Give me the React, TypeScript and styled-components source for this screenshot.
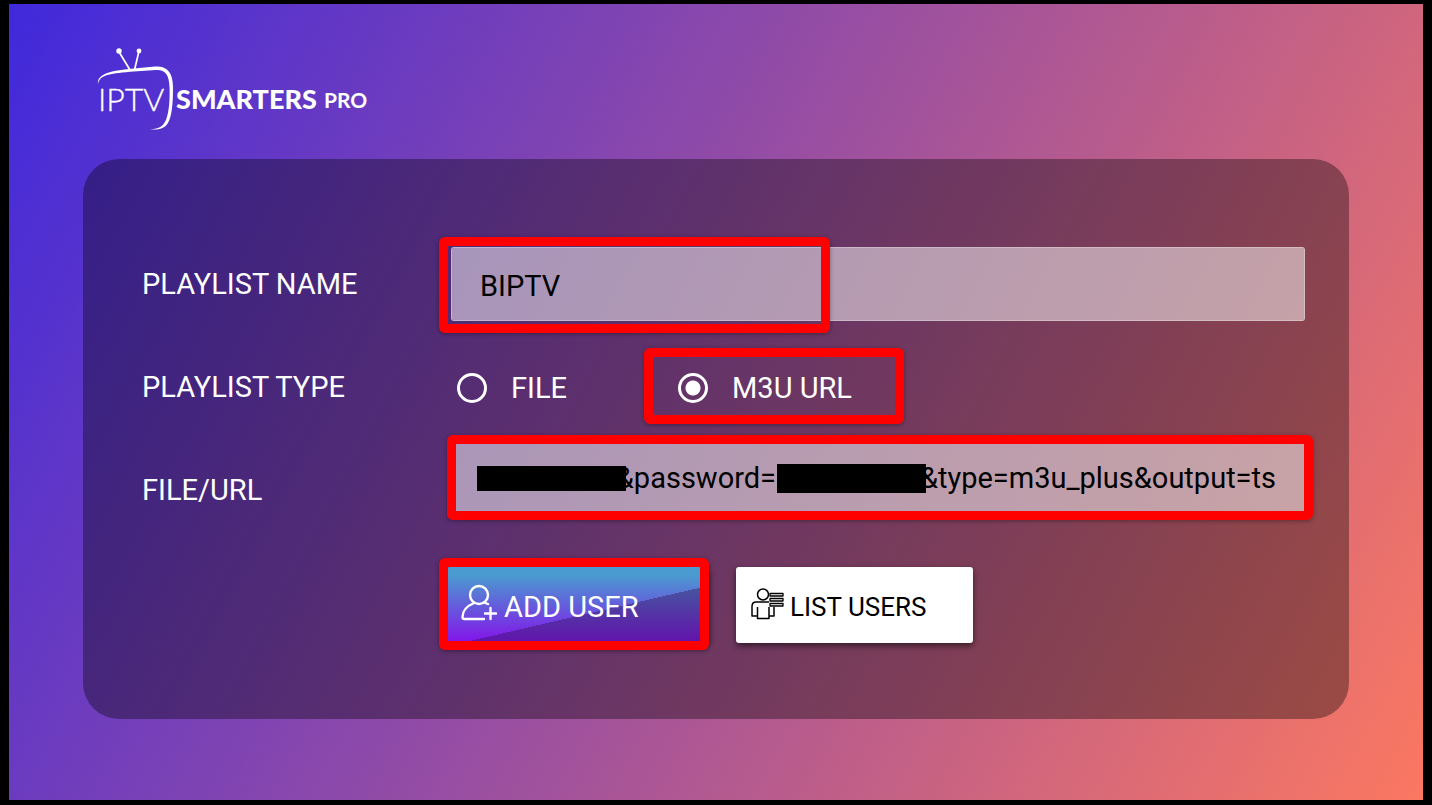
import React, { useState } from "react";
import styled, { createGlobalStyle } from "styled-components";

const GlobalStyle = createGlobalStyle`
  *, *::before, *::after { box-sizing: border-box; }
  html, body, #root { height: 100%; }
  body {
    margin: 0;
    background: #000;
    font-family: Roboto, "Liberation Sans", sans-serif;
    font-size: 29px;
    line-height: 36px;
  }
`;

const Screen = styled.main`
  display: flex;
  flex-direction: column;
  min-height: 100vh;
  padding: 40px 74px 81px;
  border: solid #000;
  border-width: 4px 9px 5px;
  background: linear-gradient(118deg, #4029dc 0%, #fb7861 100%) padding-box;
`;

const Header = styled.header`
  height: 115px;
  padding-left: 12px;
`;

const Logo = styled.svg`
  display: block;
  width: 280px;
  height: 90px;
  fill: #fff;
  font-family: Lato, sans-serif;
`;

const Card = styled.form`
  display: flex;
  flex: 1;
  flex-direction: column;
  padding: 88px 44px 76px 59px;
  border-radius: 36px;
  background: rgba(0, 0, 0, 0.35);
  color: #fff;
`;

const Row = styled.div<{ $height: number; $gap: number }>`
  display: grid;
  grid-template-columns: 309px minmax(0, 1fr);
  align-items: center;
  height: ${(p) => p.$height}px;
  margin-bottom: ${(p) => p.$gap}px;
`;

const Field = styled.div`
  position: relative;
  align-self: start;
  height: 74px;
`;

const TextInput = styled.input<{ $align?: string; $padding: string }>`
  display: block;
  width: 100%;
  height: 100%;
  padding: ${(p) => p.$padding};
  border: 1px solid rgba(255, 255, 255, 0.65);
  border-radius: 3px;
  background: rgba(255, 255, 255, 0.5) padding-box;
  color: #000;
  font: inherit;
  outline: none;
  text-align: ${(p) => p.$align ?? "left"};
`;

const Highlight = styled.span<{ $inset: string; $width?: string }>`
  position: absolute;
  inset: ${(p) => p.$inset};
  width: ${(p) => p.$width ?? "auto"};
  border: 9px solid #f00;
  border-radius: 6px;
  box-shadow: 0 1px 4px rgba(0, 0, 0, 0.35);
  pointer-events: none;
`;

const Redaction = styled.span<{ $right: number; $top: number; $width: number; $height: number }>`
  position: absolute;
  top: ${(p) => p.$top}px;
  right: ${(p) => p.$right}px;
  width: ${(p) => p.$width}px;
  height: ${(p) => p.$height}px;
  background: #000;
`;

const Options = styled.div`
  display: flex;
  align-items: center;
  gap: 103px;
  padding-left: 6px;
`;

const Option = styled.label`
  position: relative;
  display: flex;
  align-items: center;
  gap: 24px;
  height: 60px;
  padding-right: 42px;
  padding-top: 2px;
  &:first-child { padding-right: 8px; }
`;

const Radio = styled.input`
  appearance: none;
  width: 30px;
  height: 30px;
  margin: 0;
  border: 3px solid #fff;
  border-radius: 50%;
  &:checked { background: radial-gradient(circle, #fff 7px, transparent 8px); }
`;

const Actions = styled.div`
  display: flex;
  gap: 27px;
  padding-left: 305px;
`;

const Button = styled.button<{ $primary?: boolean }>`
  position: relative;
  display: flex;
  align-items: center;
  gap: 6px;
  width: ${(p) => (p.$primary ? 262 : 237)}px;
  height: 76px;
  padding: 4px 14px 0;
  border: 0;
  border-radius: 3px;
  background: ${(p) =>
    p.$primary
      ? "linear-gradient(167deg, transparent 58%, rgba(48, 16, 80, 0.4) 58%), linear-gradient(#4a9bd0 8px, #811ae8 72px)"
      : "#fff"};
  color: ${(p) => (p.$primary ? "#fff" : "#000")};
  box-shadow: 0 3px 6px rgba(0, 0, 0, 0.55);
  font: inherit;
  font-size: ${(p) => (p.$primary ? 29 : 26)}px;
  white-space: nowrap;
`;

const Icon = styled.svg`
  flex: none;
  margin-bottom: 8px;
  fill: none;
  stroke: currentColor;
`;

function BrandLogo() {
  return (
    <Logo viewBox="95 44 280 90" role="img" aria-label="IPTV Smarters Pro">
      <circle cx="119" cy="51" r="2.7" />
      <circle cx="139" cy="51" r="2.4" />
      <path d="M118.5 51L130 70M139 51l-4.5 19" fill="none" stroke="#fff" strokeWidth="1.7" />
      <path d="M98 84C97 76 106 71 129 69L155 66.5C166 66 173 71 173 88C173 103 172 116 168 123C165 128 160 130 150 129.5C160 128.5 163 126 166 120C169 112 170 100 169.5 87C169 74 165 69.500 156 70L130 71.8C108 74 100 75 98 84Z" />
      <text x="98" y="111" fontSize="32" fontWeight="300" stroke="#fff" strokeWidth="0.3">IPTV</text>
      <text x="176" y="109" fontSize="27" fontWeight="900">SMARTERS</text>
      <text x="324" y="108" fontSize="21" fontWeight="700">PRO</text>
    </Logo>
  );
}

function AddUserIcon() {
  return (
    <Icon width="37" height="38" viewBox="0 0 37 38" strokeWidth="2.4" strokeLinecap="round">
      <ellipse cx="18" cy="11" rx="9" ry="9" />
      <path d="M13 19C6 22 1.5 27 1.5 33q0 2 2 2H23M23 18.500l4 1.500M29.500 24v11M24 29.500h11" />
    </Icon>
  );
}

function ListUsersIcon() {
  return (
    <Icon width="34" height="34" viewBox="0 0 34 34" strokeWidth="1.5" strokeLinejoin="round">
      <circle cx="13" cy="8.500" r="5.5" />
      <path d="M7 30H2V20.500q0-4.500 4-4.500H19M7.500 21v11.500h11.500V21M19 30h5V21" />
      <path strokeWidth="1.300" d="M20 7.500h13v2.500H20zM20 12.500h13v2.500H20zM20 17.500h13v2.500H20z" />
    </Icon>
  );
}

export default function App() {
  const [name, setName] = useState("BIPTV");
  const [type, setType] = useState("m3u");
  const [url, setUrl] = useState(`&password=${" ".repeat(20)}&type=m3u_plus&output=ts`);

  return (
    <>
      <GlobalStyle />
      <Screen>
        <Header>
          <BrandLogo />
        </Header>
        <Card onSubmit={(e) => e.preventDefault()}>
          <Row $height={74} $gap={36}>
            <label htmlFor="name">PLAYLIST NAME</label>
            <Field>
              <TextInput id="name" $padding="4px 28px 0" value={name} onChange={(e) => setName(e.target.value)} />
              <Highlight $inset="-10px auto -12px -12px" $width="391px" />
            </Field>
          </Row>
          <Row $height={60} $gap={26} role="radiogroup" aria-labelledby="type-label">
            <span id="type-label">PLAYLIST TYPE</span>
            <Options>
              <Option>
                <Radio type="radio" name="type" checked={type === "file"} onChange={() => setType("file")} />
                FILE
              </Option>
              <Option>
                <Radio type="radio" name="type" checked={type === "m3u"} onChange={() => setType("m3u")} />
                M3U URL
                <Highlight $inset="-9px -10px -7px -34px" />
              </Option>
            </Options>
          </Row>
          <Row $height={94} $gap={30}>
            <label htmlFor="url">FILE/URL</label>
            <Field>
              <TextInput
                id="url"
                $align="right"
                $padding="0 28px 5px"
                value={url}
                onChange={(e) => setUrl(e.target.value)}
              />
              <Redaction $right={679} $top={23} $width={149} $height={25} />
              <Redaction $right={379} $top={21} $width={149} $height={29} />
              <Highlight $inset="-8px -8px -3px -4px" />
            </Field>
          </Row>
          <Actions>
            <Button type="submit" $primary>
              <AddUserIcon />
              ADD USER
              <Highlight $inset="-9px 0 -7px -8px" />
            </Button>
            <Button type="button">
              <ListUsersIcon />
              LIST USERS
            </Button>
          </Actions>
        </Card>
      </Screen>
    </>
  );
}
